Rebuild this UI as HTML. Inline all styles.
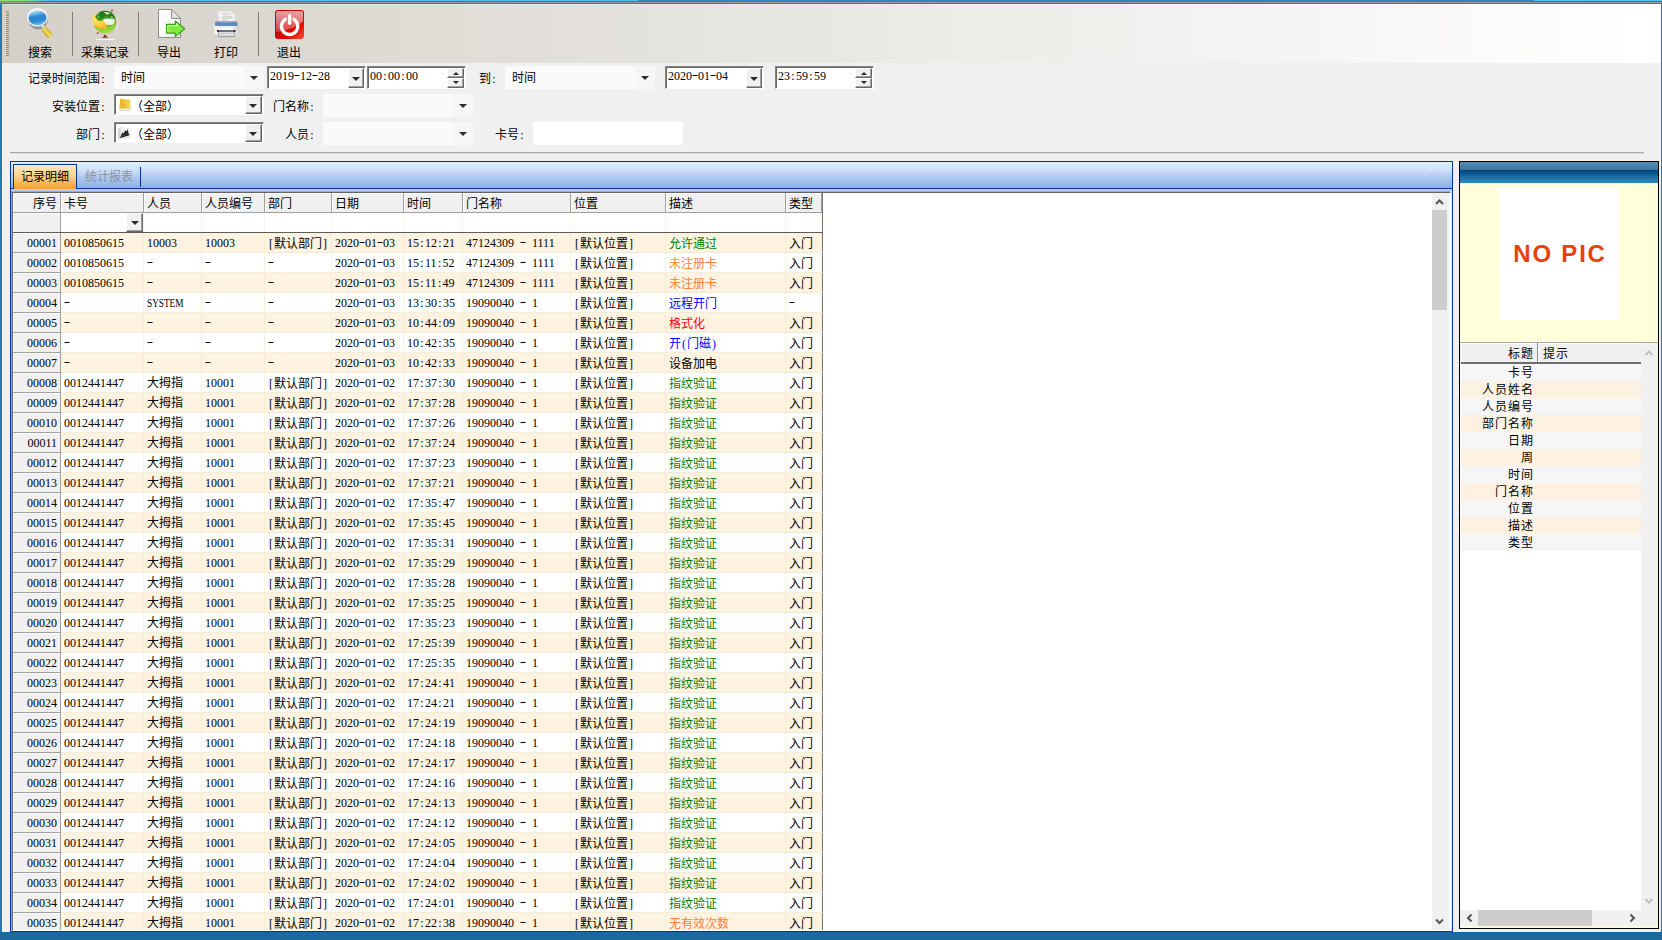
<!DOCTYPE html>
<html lang="zh-CN">
<head>
<meta charset="utf-8">
<title>记录明细</title>
<style>
*{box-sizing:border-box;margin:0;padding:0}
html,body{width:1662px;height:940px;overflow:hidden;background:#f0f0f0}
body{position:relative;font-family:"Liberation Sans",sans-serif;font-size:12px;color:#000;line-height:14px}
.a{position:absolute;white-space:nowrap;overflow:hidden}
.t{position:absolute;white-space:nowrap;height:14px;line-height:14px}
.r{text-align:right}
.c{text-align:center}
.sep{position:absolute;top:8px;width:1px;height:44px;background:#7e7c78}
.flat{position:absolute;background:#fafafa;height:23px}
.flat i{position:absolute;right:0;top:0;width:20px;height:23px;background:#f6f6f6}
.arr{position:absolute;width:0;height:0;border-left:4px solid transparent;border-right:4px solid transparent;border-top:4px solid #2b2b2b}
.sunk{position:absolute;background:#fff;border:1px solid #848484;border-right-color:#fff;border-bottom-color:#fff;box-shadow:inset 1px 1px 0 #696969}
.btn{position:absolute;background:#f0f0f0;border:1px solid #fff;border-right-color:#696969;border-bottom-color:#696969;box-shadow:inset -1px -1px 0 #a0a0a0}
.arr.s{border-left-width:3px;border-right-width:3px;border-top-width:3px}
.hc{position:absolute;top:0;height:20px;line-height:20px;padding-top:1px;background:#f0f0f0;border-right:1px solid #a0a0a0;border-bottom:1px solid #a0a0a0;box-shadow:inset 1px 1px 0 #fff;white-space:nowrap;overflow:hidden}
.fc,.fx{position:absolute;left:0;width:48px;background:#f0f0f0;border-right:1px solid #a0a0a0;border-bottom:1px solid #a0a0a0;box-shadow:inset 1px 1px 0 #fff}
.fx{top:0;height:20px;line-height:20px;padding-top:1px;text-align:right;padding-right:3px;overflow:hidden}
.row{position:absolute;left:0;width:810px;height:20px;background:#fff;border-bottom:1px solid #f3eed8;border-right:1px solid #787878}
.row.o{background:#fef2e0;border-bottom-color:#f1ecd3}
.d{position:absolute;top:0;height:19px;line-height:20px;padding-top:1px;padding-left:3px;white-space:nowrap;overflow:hidden;border-right:1px solid #faf3df}
.o .d{border-right-color:#f6ecd4}
b{font-weight:normal;display:inline-block;width:6px;text-align:center;font-family:"Liberation Serif",serif}
.s{font-family:"Liberation Serif","Liberation Sans",sans-serif;word-spacing:3px}
u{text-decoration:none;display:inline-block;transform:scaleX(.77);transform-origin:0 50%}
.g{color:#008000}.or{color:#ff7f3f}.b{color:#0000ff}.rd{color:#ff0000}
.rr{left:1px;width:180px;height:17px;line-height:17px;padding-top:1px;padding-right:106.500px;text-align:right;letter-spacing:1.200px}
.d.s,.fx.s{padding-top:0}
em{font-style:normal;display:inline-block;width:6px;text-align:center;font-family:"Liberation Serif",serif;transform:scaleX(1.600);position:relative;top:-1.500px}

</style>
</head>
<body>
<div class="a" style="left:0;top:0;width:1662px;height:1px;background:linear-gradient(90deg,#80e36c 0,#80e36c 22px,#52bcee 46px,#52bcee 638px,#2f88bc 638px,#2f88bc 1534px,#52bcee 1534px)"></div>
<div class="a" style="left:0;top:1px;width:1662px;height:1px;background:linear-gradient(90deg,#58a858 0,#58a858 22px,#357ca4 46px,#357ca4 638px,#2f84b6 638px,#2f84b6 1534px,#357ca4 1534px)"></div>
<div class="a" style="left:0;top:2px;width:1662px;height:1px;background:#9e9a98"></div>
<div class="a" style="left:0;top:3px;width:1662px;height:1px;background:#6a6a6a"></div>
<div class="a" style="left:0;top:4px;width:2px;height:928px;background:#1f7bb6"></div>
<div class="a" style="left:1661px;top:4px;width:1px;height:928px;background:#1f7bb6"></div>
<div class="a" style="left:0;top:932px;width:1662px;height:8px;background:#1a689c"></div>
<div class="a" id="toolbar" style="left:2px;top:4px;width:1659px;height:59px;background:linear-gradient(90deg,#d4d0c8 0,#fff 1640px);box-shadow:inset 0 1px 0 rgba(255,255,255,.35)">
<div class="a" style="left:4px;top:7px;width:3px;height:46px;background:repeating-linear-gradient(180deg,#8f8b85 0,#8f8b85 1px,transparent 1px,transparent 2px)"></div>
<div class="sep" style="left:70px"></div>
<div class="sep" style="left:136px"></div>
<div class="sep" style="left:256px"></div>
<div class="t c" style="left:-2.5px;top:42px;width:80px">搜索</div>
<div class="t c" style="left:62.5px;top:42px;width:80px">采集记录</div>
<div class="t c" style="left:127px;top:42px;width:80px">导出</div>
<div class="t c" style="left:184px;top:42px;width:80px">打印</div>
<div class="t c" style="left:247px;top:42px;width:80px">退出</div>
</div>
<svg class="a" style="left:0;top:0" width="330" height="63" viewBox="0 0 330 63">
<defs>
<linearGradient id="gLens" x1="0" y1="0" x2="0.25" y2="1"><stop offset="0" stop-color="#c9ecf8"/><stop offset=".22" stop-color="#8fcbee"/><stop offset=".5" stop-color="#2c86d2"/><stop offset=".78" stop-color="#2a8ad4"/><stop offset="1" stop-color="#62b4e4"/></linearGradient>
<linearGradient id="gRim" x1="0" y1="0" x2="0" y2="1"><stop offset="0" stop-color="#d8d8d8"/><stop offset="1" stop-color="#8c8c8c"/></linearGradient>
<linearGradient id="gHand" x1="0" y1="0" x2="1" y2="0"><stop offset="0" stop-color="#c89a10"/><stop offset=".45" stop-color="#f6e468"/><stop offset="1" stop-color="#d8a818"/></linearGradient>
<radialGradient id="gGlobe" cx=".42" cy=".3" r=".8"><stop offset="0" stop-color="#3f9a2a"/><stop offset=".45" stop-color="#2f8a1c"/><stop offset=".75" stop-color="#6fc028"/><stop offset="1" stop-color="#9ad838"/></radialGradient>
<linearGradient id="gYel" x1="0" y1="0" x2="1" y2="1"><stop offset="0" stop-color="#ffe85a"/><stop offset=".6" stop-color="#ffd040"/><stop offset="1" stop-color="#ffa820"/></linearGradient>
<linearGradient id="gDoc" x1="0" y1="0" x2="1" y2="1"><stop offset="0" stop-color="#ffffff"/><stop offset=".5" stop-color="#fafafa"/><stop offset="1" stop-color="#e6e6e6"/></linearGradient>
<linearGradient id="gArr" x1="0" y1="0" x2="0" y2="1"><stop offset="0" stop-color="#c4f59a"/><stop offset=".45" stop-color="#7fea38"/><stop offset="1" stop-color="#8aec4a"/></linearGradient>
<linearGradient id="gPrn" x1="0" y1="0" x2="1" y2="0"><stop offset="0" stop-color="#f4f4f4"/><stop offset=".7" stop-color="#fafafa"/><stop offset="1" stop-color="#cfcfcf"/></linearGradient>
<linearGradient id="gTray" x1="0" y1="0" x2="0" y2="1"><stop offset="0" stop-color="#f4f4f4"/><stop offset=".45" stop-color="#c8c8c8"/><stop offset=".6" stop-color="#ececec"/><stop offset="1" stop-color="#a2a2a2"/></linearGradient>
<linearGradient id="gRed" x1="0" y1="0" x2="1" y2="1"><stop offset="0" stop-color="#b00000"/><stop offset=".35" stop-color="#c40000"/><stop offset=".7" stop-color="#e20600"/><stop offset="1" stop-color="#f8583c"/></linearGradient>
<linearGradient id="gGloss" x1="0" y1="0" x2="0" y2="1"><stop offset="0" stop-color="#f4e4e4" stop-opacity=".72"/><stop offset="1" stop-color="#fff" stop-opacity=".22"/></linearGradient>
</defs>
<!-- magnifier -->
<ellipse cx="38" cy="19.800" rx="10" ry="9.500" fill="url(#gRim)"/>
<ellipse cx="37.3" cy="17.2" rx="10.3" ry="9.4" fill="#f3f3f3"/>
<ellipse cx="37.5" cy="17.8" rx="8.9" ry="7.4" fill="url(#gLens)"/>
<path d="M42 25.5L44.2 28.6" stroke="#b9b9b9" stroke-width="3.4"/>
<path d="M42.4 25.4L44.4 28.2" stroke="#f1f1f1" stroke-width="1.2"/>
<g transform="rotate(-42 47 32.3)"><rect x="44" y="27.300" width="6" height="10.200" rx="1" fill="url(#gHand)"/></g>
<!-- globe -->
<clipPath id="cGl"><circle cx="105" cy="21.900" r="11.200"/></clipPath>
<path d="M111 10.700A12.800 12.800 0 1 1 97.660 32.490" fill="none" stroke="#d9c4b6" stroke-width="1.100"/>
<path d="M116.800 17a12.800 12.800 0 0 1 -2 13.500" fill="none" stroke="#efe4dc" stroke-width="1.100"/>
<g clip-path="url(#cGl)">
<rect x="93" y="10" width="24" height="24" fill="url(#gGlobe)"/>
<path d="M92 25.500q12 5.500 25-3v12h-25z" fill="#8fd233"/>
<path d="M93 29q11 5 23.500-2v7h-23.500z" fill="#a2dc44" opacity=".8"/>
<path d="M100.500 11.500q5-1.500 10 .5q3.500 2.500 4.500 6q-2.500-1.200-5-.600q-2-2.400-4.500-2q-2.500 .8-2 2.800q-2.500 .500-4.500-3.200z" fill="#1d7712" opacity=".8"/>
<path d="M103.200 19.600c2-1.300 7-1.400 11.300-.400c.600 2.300 .100 4.300-1.500 5.400c-3 1-6.500 .800-9 .200c-1.200-1.800-1.400-3.700-.800-5.200z" fill="#eef5e6"/>
<path d="M103.600 12.400q3.200-.9 6.600 .9q-1.600 1.700-3.600 1.200q-1.400-1.400-3-2.100z" fill="#e8f2de" opacity=".9"/>
<path d="M95.500 15.500l3.500-2.300M97 17.500l2-1.300" stroke="#cfe8c0" stroke-width=".8" opacity=".7"/>
<path d="M110.500 16.300l2 .300l.5 1.200l-2 .100z" fill="#e4f0da" opacity=".8"/>
</g>
<path d="M92.300 15.300q1.100-.9 2.200-.500q.6 2.400 2.200 4q1.200 1.400 2.800 2.200q1.300-.2 2.600-.8q3 2.500 6 4.900q-2.400 2.600-5.100 4.900l-.7-1.100q-2.800-.4-5.300-1.500q-2-1.100-3-2.500q-1.700-3-1.700-9.600z" fill="url(#gYel)"/>
<path d="M93.500 23.300q1 2.200 3.500 3.600q2.500 1.100 5.300 1.400l.7 1.700l1.500-1.400q-.8-.9-1.700-1.100q-6-.3-9.300-4.200z" fill="#f79a16" opacity=".85"/>
<path d="M111.300 11.600l1.300-2.100" stroke="#8a4a3a" stroke-width="1.300"/>
<path d="M97 34l1.300-1.800" stroke="#a8603a" stroke-width="1.300"/>
<path d="M101.300 37.700q2.800-.6 3.200-3h1.200q.4 2.400 3.200 3z" fill="#6e3418"/>
<path d="M96 39.500h19" stroke="#f6f6f6" stroke-width="1"/>
<!-- export -->
<path d="M158.500 9.500h13l9 9v19h-22z" fill="url(#gDoc)" stroke="#8e8e8e" stroke-width="1"/>
<path d="M171.500 9.500v9h9z" fill="#e3e3e3" stroke="#8e8e8e" stroke-width="1" stroke-linejoin="round"/>
<path d="M166.600 24.300h8.700v-3.300l9.400 7.700l-9.400 7.700v-3.300h-8.700z" fill="url(#gArr)" stroke="#3c9c1c" stroke-width="1.200" stroke-linejoin="round"/>
<path d="M167.800 31.900v-6.400h8.700v-2" fill="none" stroke="#e6fbd4" stroke-width=".8" opacity=".9"/>
<!-- printer -->
<path d="M218.200 11.200h12.800l3.800 3.400v8h-16.600z" fill="#f0f0f0"/>
<path d="M222 13.700h8.500M222 16.500h10.500M222 18.300h10.500M222 20.200h5" stroke="#d6d6d6" stroke-width="1.400"/>
<rect x="214.200" y="24.500" width="24.400" height="9.400" rx="1.200" fill="url(#gPrn)"/>
<rect x="215" y="21" width="22.500" height="5" rx="1.500" fill="#aab2bd"/><rect x="215" y="22.600" width="22.500" height="3.400" rx="1" fill="#5b89c5"/>
<path d="M217.300 22h2M233 22h2" stroke="#6d7782" stroke-width="1"/>
<path d="M216 25.700h20.500" stroke="#6f9ad2" stroke-width=".8"/>
<rect x="218.200" y="31" width="16.600" height="6" fill="url(#gTray)"/>
<path d="M218.500 31v5.700h16v-5.700" fill="none" stroke="#a6a6a6" stroke-width=".9"/>
<rect x="217" y="30.200" width="18.400" height="1.500" rx=".7" fill="#4a4a4a"/>
<circle cx="218" cy="31" r="1" fill="#1a1a1a"/><circle cx="234.500" cy="31" r="1" fill="#1a1a1a"/>
<!-- exit -->
<rect x="275" y="10" width="29" height="29" rx="3" fill="url(#gRed)"/>
<path d="M276 13q0-2 2-2h23q2 0 2 2v8.500q-9 8.500-27 10.500z" fill="url(#gGloss)"/>
<path d="M293.950 19.350a8.200 8.200 0 1 1 -8.700 0" fill="none" stroke="#fff" stroke-width="3.300" stroke-linecap="round"/>
<path d="M289.600 15.600v7.600" stroke="#fff" stroke-width="3.400" stroke-linecap="round"/>
</svg>
<div class="t r" style="left:-4px;top:72px;width:110px">记录时间范围<b>:</b></div>
<div class="flat" style="left:114px;top:66px;width:150px"><i></i><div class="arr" style="right:6px;top:10px"></div><div class="t" style="left:6.500px;top:5px">时间</div></div>
<div class="sunk" style="left:267px;top:66px;width:99px;height:23px"><div class="t s" style="left:2px;top:2px">2019<em>-</em>12<em>-</em>28</div><div class="btn" style="left:80px;top:1px;width:16px;height:20px"><div class="arr" style="left:3px;top:8px"></div></div></div>
<div class="sunk" style="left:367px;top:66px;width:99px;height:23px"><div class="t s" style="left:2px;top:2px">00<b>:</b>00<b>:</b>00</div><div class="btn" style="left:79px;top:1px;width:17px;height:10px"><div class="arr s" style="left:5px;top:3px;border-top:0;border-bottom:3px solid #2b2b2b"></div></div><div class="btn" style="left:79px;top:11px;width:17px;height:10px"><div class="arr s" style="left:5px;top:2px"></div></div></div>
<div class="t r" style="left:387px;top:72px;width:110px">到<b>:</b></div>
<div class="flat" style="left:505px;top:66px;width:150px"><i></i><div class="arr" style="right:6px;top:10px"></div><div class="t" style="left:6.500px;top:5px">时间</div></div>
<div class="sunk" style="left:665px;top:66px;width:99px;height:23px"><div class="t s" style="left:2px;top:2px">2020<em>-</em>01<em>-</em>04</div><div class="btn" style="left:80px;top:1px;width:16px;height:20px"><div class="arr" style="left:3px;top:8px"></div></div></div>
<div class="sunk" style="left:775px;top:66px;width:99px;height:23px"><div class="t s" style="left:2px;top:2px">23<b>:</b>59<b>:</b>59</div><div class="btn" style="left:79px;top:1px;width:17px;height:10px"><div class="arr s" style="left:5px;top:3px;border-top:0;border-bottom:3px solid #2b2b2b"></div></div><div class="btn" style="left:79px;top:11px;width:17px;height:10px"><div class="arr s" style="left:5px;top:2px"></div></div></div>
<div class="t r" style="left:-4px;top:100px;width:110px">安装位置<b>:</b></div>
<div class="sunk" style="left:114px;top:94px;width:150px;height:21px"><svg class="a" style="left:4px;top:2px" width="14" height="15" viewBox="0 0 14 15"><defs><linearGradient id="gFo" x1="0" y1="0" x2="1" y2="1"><stop offset="0" stop-color="#e8b820"/><stop offset=".5" stop-color="#f2cb45"/><stop offset="1" stop-color="#f8e080"/></linearGradient></defs><path d="M.200 11.300h11.900v2.900h-11.900z" fill="#ecedf0"/><path d="M1 13.600h10.300" stroke="#d4d6da" stroke-width=".8"/><path d="M1.200 1.800h3.500l.8.600h5.600l.8 9.100h-11.600z" fill="url(#gFo)"/><path d="M1.300 2l9.500 9.500h-10.300z" fill="#e4b018" opacity=".55"/></svg><div class="t" style="left:15.500px;top:4.500px">（全部）</div><div class="btn" style="left:130px;top:1px;width:17px;height:18px"><div class="arr" style="left:3px;top:7px"></div></div></div>
<div class="t r" style="left:205px;top:100px;width:110px">门名称<b>:</b></div>
<div class="flat" style="left:323px;top:94px;width:150px"><i></i><div class="arr" style="right:6px;top:10px"></div></div>
<div class="t r" style="left:-4px;top:128px;width:110px">部门<b>:</b></div>
<div class="sunk" style="left:114px;top:122px;width:150px;height:21px"><svg class="a" style="left:2px;top:2px" width="15" height="15" viewBox="0 0 15 15"><path d="M1 3.500l2-1.500h4l1 1h5.500v10.500l-12.500 .5z" fill="#e9e9e9"/><path d="M3 2.500h4l1 1h5v1.500h-10z" fill="#f6f6f6"/><path d="M1 3.500l2.500-.5v11l-2.500 0z" fill="#d2d2d2"/><path d="M3.600 11.600l1.800-4.200l1.400 .8l1.300-2.800l1.500 .9l1-2.200l1.200 5.300z" fill="#2a2a2a"/><path d="M3.200 12.400l9-2.800" stroke="#1a1a1a" stroke-width="1.100"/></svg><div class="t" style="left:15.500px;top:4.500px">（全部）</div><div class="btn" style="left:130px;top:1px;width:17px;height:18px"><div class="arr" style="left:3px;top:7px"></div></div></div>
<div class="t r" style="left:205px;top:128px;width:110px">人员<b>:</b></div>
<div class="flat" style="left:323px;top:122px;width:150px"><i></i><div class="arr" style="right:6px;top:10px"></div></div>
<div class="t r" style="left:415px;top:128px;width:110px">卡号<b>:</b></div>
<div class="a" style="left:533px;top:122px;width:150px;height:23px;background:#fff"></div>
<div class="a" style="left:10px;top:152px;width:1634px;height:2px;background:#a9a9a9;border-bottom:1px solid #dcdcdc"></div>
<div class="a" id="panel" style="left:10px;top:161px;width:1443px;height:771px;border:1px solid #0832a4;background:#dce8fa">
<div class="a" style="left:0;top:0;width:1441px;height:26px;background:linear-gradient(180deg,#e4eefc 0,#cfe0f8 30%,#a8c4ee 65%,#8db2e8 100%)"></div>
<div class="a" style="left:0;top:26px;width:1441px;height:1px;background:#0832a4"></div>
<div class="a" style="left:0;top:27px;width:1441px;height:2px;background:#b6cdf2"></div>
<div class="a" style="left:2px;top:2px;width:64px;height:25px;border:1px solid #0832a4;border-bottom:0;background:linear-gradient(180deg,#fde9c4 0,#fbd38c 45%,#f6b24a 80%,#f0a030 100%)"><div class="t c" style="left:0;top:5px;width:62px">记录明细</div></div>
<div class="t" style="left:74px;top:8px;color:#8a929c">统计报表</div>
<div class="a" style="left:129px;top:5px;width:1px;height:20px;background:#0832a4"></div>
<svg class="a" style="left:1410px;top:6px" width="30" height="12" viewBox="0 0 30 12"><path d="M7 1.500v8l-4-4zM21 1.500v8l4-4z" fill="#c0d5f6"/></svg>
<div class="a" id="grid" style="left:1px;top:30px;width:1439px;height:739px;background:#fff;border-left:1px solid #646464;border-top:1px solid #646464;border-right:1px solid #fff;border-bottom:1px solid #fff;box-shadow:-1px -1px 0 #a9a9a9">
<div class="hc r" style="left:0px;width:48px;padding-right:3px">序号</div><div class="hc " style="left:48px;width:83px;padding-left:3px">卡号</div><div class="hc " style="left:131px;width:58px;padding-left:3px">人员</div><div class="hc " style="left:189px;width:63px;padding-left:3px">人员编号</div><div class="hc " style="left:252px;width:67px;padding-left:3px">部门</div><div class="hc " style="left:319px;width:72px;padding-left:3px">日期</div><div class="hc " style="left:391px;width:59px;padding-left:3px">时间</div><div class="hc " style="left:450px;width:108px;padding-left:3px">门名称</div><div class="hc " style="left:558px;width:95px;padding-left:3px">位置</div><div class="hc " style="left:653px;width:120px;padding-left:3px">描述</div><div class="hc " style="left:773px;width:36px;padding-left:3px">类型</div>
<div class="fc" style="top:20px;height:20px"></div><div class="a" style="left:48px;top:20px;width:761px;height:19px;background:#fff"></div><div class="a" style="left:130px;top:20px;width:1px;height:19px;background:#fbf6e6"></div><div class="a" style="left:188px;top:20px;width:1px;height:19px;background:#fbf6e6"></div><div class="a" style="left:251px;top:20px;width:1px;height:19px;background:#fbf6e6"></div><div class="a" style="left:318px;top:20px;width:1px;height:19px;background:#fbf6e6"></div><div class="a" style="left:390px;top:20px;width:1px;height:19px;background:#fbf6e6"></div><div class="a" style="left:449px;top:20px;width:1px;height:19px;background:#fbf6e6"></div><div class="a" style="left:557px;top:20px;width:1px;height:19px;background:#fbf6e6"></div><div class="a" style="left:652px;top:20px;width:1px;height:19px;background:#fbf6e6"></div><div class="a" style="left:772px;top:20px;width:1px;height:19px;background:#fbf6e6"></div><div class="a" style="left:808px;top:20px;width:1px;height:19px;background:#fbf6e6"></div><div class="btn" style="left:113px;top:20px;width:17px;height:19px"><div class="arr" style="left:4px;top:7px"></div></div><div class="a" style="left:809px;top:0;width:1px;height:40px;background:#747474"></div><div class="a" style="left:0;top:39px;width:810px;height:1px;background:#5c5c5c"></div>
<div class="row o" style="top:40px"><div class="fx s">00001</div><div class="d s" style="left:48px;width:83px">0010850615</div><div class="d s" style="left:131px;width:58px">10003</div><div class="d s" style="left:189px;width:63px">10003</div><div class="d" style="left:252px;width:67px"><b>[</b>默认部门<b>]</b></div><div class="d s" style="left:319px;width:72px">2020<em>-</em>01<em>-</em>03</div><div class="d s" style="left:391px;width:59px">15<b>:</b>12<b>:</b>21</div><div class="d s" style="left:450px;width:108px">47124309 <em>-</em> 1111</div><div class="d" style="left:558px;width:95px"><b>[</b>默认位置<b>]</b></div><div class="d g" style="left:653px;width:120px">允许通过</div><div class="d" style="left:773px;width:36px">入门</div></div>
<div class="row" style="top:60px"><div class="fx s">00002</div><div class="d s" style="left:48px;width:83px">0010850615</div><div class="d s" style="left:131px;width:58px"><em>-</em></div><div class="d s" style="left:189px;width:63px"><em>-</em></div><div class="d s" style="left:252px;width:67px"><em>-</em></div><div class="d s" style="left:319px;width:72px">2020<em>-</em>01<em>-</em>03</div><div class="d s" style="left:391px;width:59px">15<b>:</b>11<b>:</b>52</div><div class="d s" style="left:450px;width:108px">47124309 <em>-</em> 1111</div><div class="d" style="left:558px;width:95px"><b>[</b>默认位置<b>]</b></div><div class="d or" style="left:653px;width:120px">未注册卡</div><div class="d" style="left:773px;width:36px">入门</div></div>
<div class="row o" style="top:80px"><div class="fx s">00003</div><div class="d s" style="left:48px;width:83px">0010850615</div><div class="d s" style="left:131px;width:58px"><em>-</em></div><div class="d s" style="left:189px;width:63px"><em>-</em></div><div class="d s" style="left:252px;width:67px"><em>-</em></div><div class="d s" style="left:319px;width:72px">2020<em>-</em>01<em>-</em>03</div><div class="d s" style="left:391px;width:59px">15<b>:</b>11<b>:</b>49</div><div class="d s" style="left:450px;width:108px">47124309 <em>-</em> 1111</div><div class="d" style="left:558px;width:95px"><b>[</b>默认位置<b>]</b></div><div class="d or" style="left:653px;width:120px">未注册卡</div><div class="d" style="left:773px;width:36px">入门</div></div>
<div class="row" style="top:100px"><div class="fx s">00004</div><div class="d s" style="left:48px;width:83px"><em>-</em></div><div class="d s" style="left:131px;width:58px"><u>SYSTEM</u></div><div class="d s" style="left:189px;width:63px"><em>-</em></div><div class="d s" style="left:252px;width:67px"><em>-</em></div><div class="d s" style="left:319px;width:72px">2020<em>-</em>01<em>-</em>03</div><div class="d s" style="left:391px;width:59px">13<b>:</b>30<b>:</b>35</div><div class="d s" style="left:450px;width:108px">19090040 <em>-</em> 1</div><div class="d" style="left:558px;width:95px"><b>[</b>默认位置<b>]</b></div><div class="d b" style="left:653px;width:120px">远程开门</div><div class="d s" style="left:773px;width:36px"><em>-</em></div></div>
<div class="row o" style="top:120px"><div class="fx s">00005</div><div class="d s" style="left:48px;width:83px"><em>-</em></div><div class="d s" style="left:131px;width:58px"><em>-</em></div><div class="d s" style="left:189px;width:63px"><em>-</em></div><div class="d s" style="left:252px;width:67px"><em>-</em></div><div class="d s" style="left:319px;width:72px">2020<em>-</em>01<em>-</em>03</div><div class="d s" style="left:391px;width:59px">10<b>:</b>44<b>:</b>09</div><div class="d s" style="left:450px;width:108px">19090040 <em>-</em> 1</div><div class="d" style="left:558px;width:95px"><b>[</b>默认位置<b>]</b></div><div class="d rd" style="left:653px;width:120px">格式化</div><div class="d" style="left:773px;width:36px">入门</div></div>
<div class="row" style="top:140px"><div class="fx s">00006</div><div class="d s" style="left:48px;width:83px"><em>-</em></div><div class="d s" style="left:131px;width:58px"><em>-</em></div><div class="d s" style="left:189px;width:63px"><em>-</em></div><div class="d s" style="left:252px;width:67px"><em>-</em></div><div class="d s" style="left:319px;width:72px">2020<em>-</em>01<em>-</em>03</div><div class="d s" style="left:391px;width:59px">10<b>:</b>42<b>:</b>35</div><div class="d s" style="left:450px;width:108px">19090040 <em>-</em> 1</div><div class="d" style="left:558px;width:95px"><b>[</b>默认位置<b>]</b></div><div class="d b" style="left:653px;width:120px">开<b>(</b>门磁<b>)</b></div><div class="d" style="left:773px;width:36px">入门</div></div>
<div class="row o" style="top:160px"><div class="fx s">00007</div><div class="d s" style="left:48px;width:83px"><em>-</em></div><div class="d s" style="left:131px;width:58px"><em>-</em></div><div class="d s" style="left:189px;width:63px"><em>-</em></div><div class="d s" style="left:252px;width:67px"><em>-</em></div><div class="d s" style="left:319px;width:72px">2020<em>-</em>01<em>-</em>03</div><div class="d s" style="left:391px;width:59px">10<b>:</b>42<b>:</b>33</div><div class="d s" style="left:450px;width:108px">19090040 <em>-</em> 1</div><div class="d" style="left:558px;width:95px"><b>[</b>默认位置<b>]</b></div><div class="d" style="left:653px;width:120px">设备加电</div><div class="d" style="left:773px;width:36px">入门</div></div>
<div class="row" style="top:180px"><div class="fx s">00008</div><div class="d s" style="left:48px;width:83px">0012441447</div><div class="d s" style="left:131px;width:58px">大拇指</div><div class="d s" style="left:189px;width:63px">10001</div><div class="d" style="left:252px;width:67px"><b>[</b>默认部门<b>]</b></div><div class="d s" style="left:319px;width:72px">2020<em>-</em>01<em>-</em>02</div><div class="d s" style="left:391px;width:59px">17<b>:</b>37<b>:</b>30</div><div class="d s" style="left:450px;width:108px">19090040 <em>-</em> 1</div><div class="d" style="left:558px;width:95px"><b>[</b>默认位置<b>]</b></div><div class="d g" style="left:653px;width:120px">指纹验证</div><div class="d" style="left:773px;width:36px">入门</div></div>
<div class="row o" style="top:200px"><div class="fx s">00009</div><div class="d s" style="left:48px;width:83px">0012441447</div><div class="d s" style="left:131px;width:58px">大拇指</div><div class="d s" style="left:189px;width:63px">10001</div><div class="d" style="left:252px;width:67px"><b>[</b>默认部门<b>]</b></div><div class="d s" style="left:319px;width:72px">2020<em>-</em>01<em>-</em>02</div><div class="d s" style="left:391px;width:59px">17<b>:</b>37<b>:</b>28</div><div class="d s" style="left:450px;width:108px">19090040 <em>-</em> 1</div><div class="d" style="left:558px;width:95px"><b>[</b>默认位置<b>]</b></div><div class="d g" style="left:653px;width:120px">指纹验证</div><div class="d" style="left:773px;width:36px">入门</div></div>
<div class="row" style="top:220px"><div class="fx s">00010</div><div class="d s" style="left:48px;width:83px">0012441447</div><div class="d s" style="left:131px;width:58px">大拇指</div><div class="d s" style="left:189px;width:63px">10001</div><div class="d" style="left:252px;width:67px"><b>[</b>默认部门<b>]</b></div><div class="d s" style="left:319px;width:72px">2020<em>-</em>01<em>-</em>02</div><div class="d s" style="left:391px;width:59px">17<b>:</b>37<b>:</b>26</div><div class="d s" style="left:450px;width:108px">19090040 <em>-</em> 1</div><div class="d" style="left:558px;width:95px"><b>[</b>默认位置<b>]</b></div><div class="d g" style="left:653px;width:120px">指纹验证</div><div class="d" style="left:773px;width:36px">入门</div></div>
<div class="row o" style="top:240px"><div class="fx s">00011</div><div class="d s" style="left:48px;width:83px">0012441447</div><div class="d s" style="left:131px;width:58px">大拇指</div><div class="d s" style="left:189px;width:63px">10001</div><div class="d" style="left:252px;width:67px"><b>[</b>默认部门<b>]</b></div><div class="d s" style="left:319px;width:72px">2020<em>-</em>01<em>-</em>02</div><div class="d s" style="left:391px;width:59px">17<b>:</b>37<b>:</b>24</div><div class="d s" style="left:450px;width:108px">19090040 <em>-</em> 1</div><div class="d" style="left:558px;width:95px"><b>[</b>默认位置<b>]</b></div><div class="d g" style="left:653px;width:120px">指纹验证</div><div class="d" style="left:773px;width:36px">入门</div></div>
<div class="row" style="top:260px"><div class="fx s">00012</div><div class="d s" style="left:48px;width:83px">0012441447</div><div class="d s" style="left:131px;width:58px">大拇指</div><div class="d s" style="left:189px;width:63px">10001</div><div class="d" style="left:252px;width:67px"><b>[</b>默认部门<b>]</b></div><div class="d s" style="left:319px;width:72px">2020<em>-</em>01<em>-</em>02</div><div class="d s" style="left:391px;width:59px">17<b>:</b>37<b>:</b>23</div><div class="d s" style="left:450px;width:108px">19090040 <em>-</em> 1</div><div class="d" style="left:558px;width:95px"><b>[</b>默认位置<b>]</b></div><div class="d g" style="left:653px;width:120px">指纹验证</div><div class="d" style="left:773px;width:36px">入门</div></div>
<div class="row o" style="top:280px"><div class="fx s">00013</div><div class="d s" style="left:48px;width:83px">0012441447</div><div class="d s" style="left:131px;width:58px">大拇指</div><div class="d s" style="left:189px;width:63px">10001</div><div class="d" style="left:252px;width:67px"><b>[</b>默认部门<b>]</b></div><div class="d s" style="left:319px;width:72px">2020<em>-</em>01<em>-</em>02</div><div class="d s" style="left:391px;width:59px">17<b>:</b>37<b>:</b>21</div><div class="d s" style="left:450px;width:108px">19090040 <em>-</em> 1</div><div class="d" style="left:558px;width:95px"><b>[</b>默认位置<b>]</b></div><div class="d g" style="left:653px;width:120px">指纹验证</div><div class="d" style="left:773px;width:36px">入门</div></div>
<div class="row" style="top:300px"><div class="fx s">00014</div><div class="d s" style="left:48px;width:83px">0012441447</div><div class="d s" style="left:131px;width:58px">大拇指</div><div class="d s" style="left:189px;width:63px">10001</div><div class="d" style="left:252px;width:67px"><b>[</b>默认部门<b>]</b></div><div class="d s" style="left:319px;width:72px">2020<em>-</em>01<em>-</em>02</div><div class="d s" style="left:391px;width:59px">17<b>:</b>35<b>:</b>47</div><div class="d s" style="left:450px;width:108px">19090040 <em>-</em> 1</div><div class="d" style="left:558px;width:95px"><b>[</b>默认位置<b>]</b></div><div class="d g" style="left:653px;width:120px">指纹验证</div><div class="d" style="left:773px;width:36px">入门</div></div>
<div class="row o" style="top:320px"><div class="fx s">00015</div><div class="d s" style="left:48px;width:83px">0012441447</div><div class="d s" style="left:131px;width:58px">大拇指</div><div class="d s" style="left:189px;width:63px">10001</div><div class="d" style="left:252px;width:67px"><b>[</b>默认部门<b>]</b></div><div class="d s" style="left:319px;width:72px">2020<em>-</em>01<em>-</em>02</div><div class="d s" style="left:391px;width:59px">17<b>:</b>35<b>:</b>45</div><div class="d s" style="left:450px;width:108px">19090040 <em>-</em> 1</div><div class="d" style="left:558px;width:95px"><b>[</b>默认位置<b>]</b></div><div class="d g" style="left:653px;width:120px">指纹验证</div><div class="d" style="left:773px;width:36px">入门</div></div>
<div class="row" style="top:340px"><div class="fx s">00016</div><div class="d s" style="left:48px;width:83px">0012441447</div><div class="d s" style="left:131px;width:58px">大拇指</div><div class="d s" style="left:189px;width:63px">10001</div><div class="d" style="left:252px;width:67px"><b>[</b>默认部门<b>]</b></div><div class="d s" style="left:319px;width:72px">2020<em>-</em>01<em>-</em>02</div><div class="d s" style="left:391px;width:59px">17<b>:</b>35<b>:</b>31</div><div class="d s" style="left:450px;width:108px">19090040 <em>-</em> 1</div><div class="d" style="left:558px;width:95px"><b>[</b>默认位置<b>]</b></div><div class="d g" style="left:653px;width:120px">指纹验证</div><div class="d" style="left:773px;width:36px">入门</div></div>
<div class="row o" style="top:360px"><div class="fx s">00017</div><div class="d s" style="left:48px;width:83px">0012441447</div><div class="d s" style="left:131px;width:58px">大拇指</div><div class="d s" style="left:189px;width:63px">10001</div><div class="d" style="left:252px;width:67px"><b>[</b>默认部门<b>]</b></div><div class="d s" style="left:319px;width:72px">2020<em>-</em>01<em>-</em>02</div><div class="d s" style="left:391px;width:59px">17<b>:</b>35<b>:</b>29</div><div class="d s" style="left:450px;width:108px">19090040 <em>-</em> 1</div><div class="d" style="left:558px;width:95px"><b>[</b>默认位置<b>]</b></div><div class="d g" style="left:653px;width:120px">指纹验证</div><div class="d" style="left:773px;width:36px">入门</div></div>
<div class="row" style="top:380px"><div class="fx s">00018</div><div class="d s" style="left:48px;width:83px">0012441447</div><div class="d s" style="left:131px;width:58px">大拇指</div><div class="d s" style="left:189px;width:63px">10001</div><div class="d" style="left:252px;width:67px"><b>[</b>默认部门<b>]</b></div><div class="d s" style="left:319px;width:72px">2020<em>-</em>01<em>-</em>02</div><div class="d s" style="left:391px;width:59px">17<b>:</b>35<b>:</b>28</div><div class="d s" style="left:450px;width:108px">19090040 <em>-</em> 1</div><div class="d" style="left:558px;width:95px"><b>[</b>默认位置<b>]</b></div><div class="d g" style="left:653px;width:120px">指纹验证</div><div class="d" style="left:773px;width:36px">入门</div></div>
<div class="row o" style="top:400px"><div class="fx s">00019</div><div class="d s" style="left:48px;width:83px">0012441447</div><div class="d s" style="left:131px;width:58px">大拇指</div><div class="d s" style="left:189px;width:63px">10001</div><div class="d" style="left:252px;width:67px"><b>[</b>默认部门<b>]</b></div><div class="d s" style="left:319px;width:72px">2020<em>-</em>01<em>-</em>02</div><div class="d s" style="left:391px;width:59px">17<b>:</b>35<b>:</b>25</div><div class="d s" style="left:450px;width:108px">19090040 <em>-</em> 1</div><div class="d" style="left:558px;width:95px"><b>[</b>默认位置<b>]</b></div><div class="d g" style="left:653px;width:120px">指纹验证</div><div class="d" style="left:773px;width:36px">入门</div></div>
<div class="row" style="top:420px"><div class="fx s">00020</div><div class="d s" style="left:48px;width:83px">0012441447</div><div class="d s" style="left:131px;width:58px">大拇指</div><div class="d s" style="left:189px;width:63px">10001</div><div class="d" style="left:252px;width:67px"><b>[</b>默认部门<b>]</b></div><div class="d s" style="left:319px;width:72px">2020<em>-</em>01<em>-</em>02</div><div class="d s" style="left:391px;width:59px">17<b>:</b>35<b>:</b>23</div><div class="d s" style="left:450px;width:108px">19090040 <em>-</em> 1</div><div class="d" style="left:558px;width:95px"><b>[</b>默认位置<b>]</b></div><div class="d g" style="left:653px;width:120px">指纹验证</div><div class="d" style="left:773px;width:36px">入门</div></div>
<div class="row o" style="top:440px"><div class="fx s">00021</div><div class="d s" style="left:48px;width:83px">0012441447</div><div class="d s" style="left:131px;width:58px">大拇指</div><div class="d s" style="left:189px;width:63px">10001</div><div class="d" style="left:252px;width:67px"><b>[</b>默认部门<b>]</b></div><div class="d s" style="left:319px;width:72px">2020<em>-</em>01<em>-</em>02</div><div class="d s" style="left:391px;width:59px">17<b>:</b>25<b>:</b>39</div><div class="d s" style="left:450px;width:108px">19090040 <em>-</em> 1</div><div class="d" style="left:558px;width:95px"><b>[</b>默认位置<b>]</b></div><div class="d g" style="left:653px;width:120px">指纹验证</div><div class="d" style="left:773px;width:36px">入门</div></div>
<div class="row" style="top:460px"><div class="fx s">00022</div><div class="d s" style="left:48px;width:83px">0012441447</div><div class="d s" style="left:131px;width:58px">大拇指</div><div class="d s" style="left:189px;width:63px">10001</div><div class="d" style="left:252px;width:67px"><b>[</b>默认部门<b>]</b></div><div class="d s" style="left:319px;width:72px">2020<em>-</em>01<em>-</em>02</div><div class="d s" style="left:391px;width:59px">17<b>:</b>25<b>:</b>35</div><div class="d s" style="left:450px;width:108px">19090040 <em>-</em> 1</div><div class="d" style="left:558px;width:95px"><b>[</b>默认位置<b>]</b></div><div class="d g" style="left:653px;width:120px">指纹验证</div><div class="d" style="left:773px;width:36px">入门</div></div>
<div class="row o" style="top:480px"><div class="fx s">00023</div><div class="d s" style="left:48px;width:83px">0012441447</div><div class="d s" style="left:131px;width:58px">大拇指</div><div class="d s" style="left:189px;width:63px">10001</div><div class="d" style="left:252px;width:67px"><b>[</b>默认部门<b>]</b></div><div class="d s" style="left:319px;width:72px">2020<em>-</em>01<em>-</em>02</div><div class="d s" style="left:391px;width:59px">17<b>:</b>24<b>:</b>41</div><div class="d s" style="left:450px;width:108px">19090040 <em>-</em> 1</div><div class="d" style="left:558px;width:95px"><b>[</b>默认位置<b>]</b></div><div class="d g" style="left:653px;width:120px">指纹验证</div><div class="d" style="left:773px;width:36px">入门</div></div>
<div class="row" style="top:500px"><div class="fx s">00024</div><div class="d s" style="left:48px;width:83px">0012441447</div><div class="d s" style="left:131px;width:58px">大拇指</div><div class="d s" style="left:189px;width:63px">10001</div><div class="d" style="left:252px;width:67px"><b>[</b>默认部门<b>]</b></div><div class="d s" style="left:319px;width:72px">2020<em>-</em>01<em>-</em>02</div><div class="d s" style="left:391px;width:59px">17<b>:</b>24<b>:</b>21</div><div class="d s" style="left:450px;width:108px">19090040 <em>-</em> 1</div><div class="d" style="left:558px;width:95px"><b>[</b>默认位置<b>]</b></div><div class="d g" style="left:653px;width:120px">指纹验证</div><div class="d" style="left:773px;width:36px">入门</div></div>
<div class="row o" style="top:520px"><div class="fx s">00025</div><div class="d s" style="left:48px;width:83px">0012441447</div><div class="d s" style="left:131px;width:58px">大拇指</div><div class="d s" style="left:189px;width:63px">10001</div><div class="d" style="left:252px;width:67px"><b>[</b>默认部门<b>]</b></div><div class="d s" style="left:319px;width:72px">2020<em>-</em>01<em>-</em>02</div><div class="d s" style="left:391px;width:59px">17<b>:</b>24<b>:</b>19</div><div class="d s" style="left:450px;width:108px">19090040 <em>-</em> 1</div><div class="d" style="left:558px;width:95px"><b>[</b>默认位置<b>]</b></div><div class="d g" style="left:653px;width:120px">指纹验证</div><div class="d" style="left:773px;width:36px">入门</div></div>
<div class="row" style="top:540px"><div class="fx s">00026</div><div class="d s" style="left:48px;width:83px">0012441447</div><div class="d s" style="left:131px;width:58px">大拇指</div><div class="d s" style="left:189px;width:63px">10001</div><div class="d" style="left:252px;width:67px"><b>[</b>默认部门<b>]</b></div><div class="d s" style="left:319px;width:72px">2020<em>-</em>01<em>-</em>02</div><div class="d s" style="left:391px;width:59px">17<b>:</b>24<b>:</b>18</div><div class="d s" style="left:450px;width:108px">19090040 <em>-</em> 1</div><div class="d" style="left:558px;width:95px"><b>[</b>默认位置<b>]</b></div><div class="d g" style="left:653px;width:120px">指纹验证</div><div class="d" style="left:773px;width:36px">入门</div></div>
<div class="row o" style="top:560px"><div class="fx s">00027</div><div class="d s" style="left:48px;width:83px">0012441447</div><div class="d s" style="left:131px;width:58px">大拇指</div><div class="d s" style="left:189px;width:63px">10001</div><div class="d" style="left:252px;width:67px"><b>[</b>默认部门<b>]</b></div><div class="d s" style="left:319px;width:72px">2020<em>-</em>01<em>-</em>02</div><div class="d s" style="left:391px;width:59px">17<b>:</b>24<b>:</b>17</div><div class="d s" style="left:450px;width:108px">19090040 <em>-</em> 1</div><div class="d" style="left:558px;width:95px"><b>[</b>默认位置<b>]</b></div><div class="d g" style="left:653px;width:120px">指纹验证</div><div class="d" style="left:773px;width:36px">入门</div></div>
<div class="row" style="top:580px"><div class="fx s">00028</div><div class="d s" style="left:48px;width:83px">0012441447</div><div class="d s" style="left:131px;width:58px">大拇指</div><div class="d s" style="left:189px;width:63px">10001</div><div class="d" style="left:252px;width:67px"><b>[</b>默认部门<b>]</b></div><div class="d s" style="left:319px;width:72px">2020<em>-</em>01<em>-</em>02</div><div class="d s" style="left:391px;width:59px">17<b>:</b>24<b>:</b>16</div><div class="d s" style="left:450px;width:108px">19090040 <em>-</em> 1</div><div class="d" style="left:558px;width:95px"><b>[</b>默认位置<b>]</b></div><div class="d g" style="left:653px;width:120px">指纹验证</div><div class="d" style="left:773px;width:36px">入门</div></div>
<div class="row o" style="top:600px"><div class="fx s">00029</div><div class="d s" style="left:48px;width:83px">0012441447</div><div class="d s" style="left:131px;width:58px">大拇指</div><div class="d s" style="left:189px;width:63px">10001</div><div class="d" style="left:252px;width:67px"><b>[</b>默认部门<b>]</b></div><div class="d s" style="left:319px;width:72px">2020<em>-</em>01<em>-</em>02</div><div class="d s" style="left:391px;width:59px">17<b>:</b>24<b>:</b>13</div><div class="d s" style="left:450px;width:108px">19090040 <em>-</em> 1</div><div class="d" style="left:558px;width:95px"><b>[</b>默认位置<b>]</b></div><div class="d g" style="left:653px;width:120px">指纹验证</div><div class="d" style="left:773px;width:36px">入门</div></div>
<div class="row" style="top:620px"><div class="fx s">00030</div><div class="d s" style="left:48px;width:83px">0012441447</div><div class="d s" style="left:131px;width:58px">大拇指</div><div class="d s" style="left:189px;width:63px">10001</div><div class="d" style="left:252px;width:67px"><b>[</b>默认部门<b>]</b></div><div class="d s" style="left:319px;width:72px">2020<em>-</em>01<em>-</em>02</div><div class="d s" style="left:391px;width:59px">17<b>:</b>24<b>:</b>12</div><div class="d s" style="left:450px;width:108px">19090040 <em>-</em> 1</div><div class="d" style="left:558px;width:95px"><b>[</b>默认位置<b>]</b></div><div class="d g" style="left:653px;width:120px">指纹验证</div><div class="d" style="left:773px;width:36px">入门</div></div>
<div class="row o" style="top:640px"><div class="fx s">00031</div><div class="d s" style="left:48px;width:83px">0012441447</div><div class="d s" style="left:131px;width:58px">大拇指</div><div class="d s" style="left:189px;width:63px">10001</div><div class="d" style="left:252px;width:67px"><b>[</b>默认部门<b>]</b></div><div class="d s" style="left:319px;width:72px">2020<em>-</em>01<em>-</em>02</div><div class="d s" style="left:391px;width:59px">17<b>:</b>24<b>:</b>05</div><div class="d s" style="left:450px;width:108px">19090040 <em>-</em> 1</div><div class="d" style="left:558px;width:95px"><b>[</b>默认位置<b>]</b></div><div class="d g" style="left:653px;width:120px">指纹验证</div><div class="d" style="left:773px;width:36px">入门</div></div>
<div class="row" style="top:660px"><div class="fx s">00032</div><div class="d s" style="left:48px;width:83px">0012441447</div><div class="d s" style="left:131px;width:58px">大拇指</div><div class="d s" style="left:189px;width:63px">10001</div><div class="d" style="left:252px;width:67px"><b>[</b>默认部门<b>]</b></div><div class="d s" style="left:319px;width:72px">2020<em>-</em>01<em>-</em>02</div><div class="d s" style="left:391px;width:59px">17<b>:</b>24<b>:</b>04</div><div class="d s" style="left:450px;width:108px">19090040 <em>-</em> 1</div><div class="d" style="left:558px;width:95px"><b>[</b>默认位置<b>]</b></div><div class="d g" style="left:653px;width:120px">指纹验证</div><div class="d" style="left:773px;width:36px">入门</div></div>
<div class="row o" style="top:680px"><div class="fx s">00033</div><div class="d s" style="left:48px;width:83px">0012441447</div><div class="d s" style="left:131px;width:58px">大拇指</div><div class="d s" style="left:189px;width:63px">10001</div><div class="d" style="left:252px;width:67px"><b>[</b>默认部门<b>]</b></div><div class="d s" style="left:319px;width:72px">2020<em>-</em>01<em>-</em>02</div><div class="d s" style="left:391px;width:59px">17<b>:</b>24<b>:</b>02</div><div class="d s" style="left:450px;width:108px">19090040 <em>-</em> 1</div><div class="d" style="left:558px;width:95px"><b>[</b>默认位置<b>]</b></div><div class="d g" style="left:653px;width:120px">指纹验证</div><div class="d" style="left:773px;width:36px">入门</div></div>
<div class="row" style="top:700px"><div class="fx s">00034</div><div class="d s" style="left:48px;width:83px">0012441447</div><div class="d s" style="left:131px;width:58px">大拇指</div><div class="d s" style="left:189px;width:63px">10001</div><div class="d" style="left:252px;width:67px"><b>[</b>默认部门<b>]</b></div><div class="d s" style="left:319px;width:72px">2020<em>-</em>01<em>-</em>02</div><div class="d s" style="left:391px;width:59px">17<b>:</b>24<b>:</b>01</div><div class="d s" style="left:450px;width:108px">19090040 <em>-</em> 1</div><div class="d" style="left:558px;width:95px"><b>[</b>默认位置<b>]</b></div><div class="d g" style="left:653px;width:120px">指纹验证</div><div class="d" style="left:773px;width:36px">入门</div></div>
<div class="row o" style="top:720px"><div class="fx s">00035</div><div class="d s" style="left:48px;width:83px">0012441447</div><div class="d s" style="left:131px;width:58px">大拇指</div><div class="d s" style="left:189px;width:63px">10001</div><div class="d" style="left:252px;width:67px"><b>[</b>默认部门<b>]</b></div><div class="d s" style="left:319px;width:72px">2020<em>-</em>01<em>-</em>02</div><div class="d s" style="left:391px;width:59px">17<b>:</b>22<b>:</b>38</div><div class="d s" style="left:450px;width:108px">19090040 <em>-</em> 1</div><div class="d" style="left:558px;width:95px"><b>[</b>默认位置<b>]</b></div><div class="d or" style="left:653px;width:120px">无有效次数</div><div class="d" style="left:773px;width:36px">入门</div></div>
<div class="a" style="left:1419px;top:0;width:17px;height:737px;background:#f0f0f0"><div class="a" style="left:0;top:17px;width:15px;height:100px;background:#cdcdcd"></div><svg class="a" style="left:0;top:0" width="17" height="737" viewBox="0 0 17 737"><path d="M4 11l3.500-3.500l3.500 3.500M4 726.500l3.500 3.500l3.500-3.500" fill="none" stroke="#555" stroke-width="2"/></svg></div>
</div>
</div>
<div class="a" id="rp" style="left:1459px;top:161px;width:200px;height:768px;border:1px solid #000;background:#fff">
<div class="a" style="left:0;top:0;width:198px;height:21px;background:linear-gradient(180deg,#578bb2 0,#4a81aa 20%,#3c769f 38%,#04487a 40%,#07528a 52%,#1668a2 68%,#2a80b6 88%,#2f88be 100%)"></div>
<div class="a" style="left:0;top:21px;width:198px;height:160px;background:#ffffdc"></div>
<div class="a" style="left:39px;top:26px;width:120px;height:132px;background:#fff"><div id="nopic" style="position:absolute;left:0;top:52px;width:122px;text-align:center;font-weight:bold;font-size:24px;line-height:28px;color:#e8410b;letter-spacing:1.8px;white-space:nowrap">NO PIC</div></div>
<div class="a" style="left:0;top:180px;width:198px;height:1px;background:#a8a8a8"></div>
<div class="a" style="left:0;top:181px;width:198px;height:20px;background:#f0f0f0"></div>
<div class="hc r" style="left:1px;top:181px;width:77px;height:20px;padding-right:3px;letter-spacing:1.2px;border-right-color:#8c8c8c;border-bottom:0">标题</div><div class="hc" style="left:78px;top:181px;width:103px;height:20px;padding-left:5px;letter-spacing:1.2px;border-right:0;border-bottom:0">提示</div>
<div class="a" style="left:1px;top:200px;width:180px;height:2px;background:#6e6e6e"></div>
<div class="a rr" style="top:202px;background:#f6f6f6">卡号</div><div class="a rr" style="top:219px;background:#fdf1e2">人员姓名</div><div class="a rr" style="top:236px;background:#f6f6f6">人员编号</div><div class="a rr" style="top:253px;background:#fdf1e2">部门名称</div><div class="a rr" style="top:270px;background:#f6f6f6">日期</div><div class="a rr" style="top:287px;background:#fdf1e2">周</div><div class="a rr" style="top:304px;background:#f6f6f6">时间</div><div class="a rr" style="top:321px;background:#fdf1e2">门名称</div><div class="a rr" style="top:338px;background:#f6f6f6">位置</div><div class="a rr" style="top:355px;background:#fdf1e2">描述</div><div class="a rr" style="top:372px;background:#f6f6f6">类型</div>
<div class="a" style="left:181px;top:182px;width:17px;height:567px;background:#f0f0f0"></div>
<svg class="a" style="left:181px;top:182px" width="17" height="567" viewBox="0 0 17 567"><path d="M4.500 11l3.500-3.500l3.500 3.500M4.500 555l3.500 3.500l3.500-3.500" fill="none" stroke="#bfbfbf" stroke-width="2"/></svg>
<div class="a" style="left:0;top:748px;width:198px;height:18px;background:#f0f0f0;border-bottom:2px solid #fbfbe0"><div class="a" style="left:18px;top:0;width:114px;height:16px;background:#cdcdcd"></div></div>
<svg class="a" style="left:0;top:748px" width="198" height="17" viewBox="0 0 198 17"><path d="M11.500 4.500l-3.500 3.500l3.500 3.500M170.500 4.500l3.500 3.500l-3.500 3.500" fill="none" stroke="#555" stroke-width="2"/></svg>
</div>
</body>
</html>
